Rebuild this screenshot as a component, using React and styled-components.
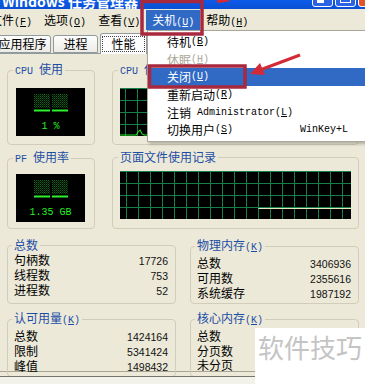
import React from 'react';
import styled, { createGlobalStyle } from 'styled-components';

const GlobalStyle = createGlobalStyle`
  *, *::before, *::after { box-sizing: border-box; }
  html, body { margin: 0; padding: 0; }
  body {
    width: 365px;
    height: 384px;
    overflow: hidden;
    background: #ece9d8;
    font-family: "Noto Sans CJK SC", "Noto Sans", sans-serif;
    font-size: 12px;
    color: #000;
  }
`;

const Window = styled.div`
  position: relative;
  width: 365px;
  height: 384px;
  overflow: hidden;
  display: flex;
  flex-direction: column;
  background: #ece9d8;
`;

const TitleBar = styled.div`
  height: 9px;
  flex-shrink: 0;
  display: flex;
  align-items: flex-end;
  overflow: hidden;
  background: linear-gradient(#0b5be9, #0a4fd4);
`;

const TitleText = styled.span`
  flex: 1;
  margin: 0 0 1px 2px;
  color: #fff;
  font-weight: bold;
  font-size: 14px;
  line-height: 14px;
  white-space: nowrap;
`;

const CaptionButtons = styled.div`
  display: flex;
  gap: 2px;
  margin: 0 -14px 2px 0;
`;

const CaptionBtn = styled.div`
  position: relative;
  width: 21px;
  height: 21px;
  flex-shrink: 0;
  border: 1px solid #fff;
  border-radius: 3px;
  background: ${p => (p.$kind === 'close' ? '#e0542c' : '#2a64e4')};

  &::after {
    content: '';
    position: absolute;
    left: 4px;
    background: #fff;
    ${p =>
      p.$kind === 'min'
        ? 'bottom: 3px; width: 7px; height: 3px;'
        : p.$kind === 'max'
        ? 'top: 4px; width: 11px; height: 12px; background: transparent; border: 1px solid #fff; border-top-width: 3px;'
        : 'display: none;'}
  }
`;

const MenuBar = styled.div`
  height: 21px;
  flex-shrink: 0;
  display: flex;
  padding-top: 1px;
  margin-left: -16px;
`;

const MenuItem = styled.div`
  padding: 0 6px;
  line-height: 20px;
  white-space: nowrap;
  background: ${p => (p.$active ? '#316ac5' : 'transparent')};
  color: ${p => (p.$active ? '#fff' : '#000')};
`;

const Half = styled.span`
  font-family: "Liberation Mono", "DejaVu Sans Mono", monospace;
  font-size: 10px;
  white-space: pre;
`;

const TabStrip = styled.div`
  position: relative;
  z-index: 1;
  height: 23px;
  flex-shrink: 0;
  display: flex;
  align-items: flex-end;
  gap: 2px;
  margin-left: -6px;
`;

const Tab = styled.div`
  width: ${p => p.$w}px;
  height: ${p => (p.$active ? 21 : 18)}px;
  margin-bottom: ${p => (p.$active ? -1 : 0)}px;
  display: flex;
  align-items: center;
  justify-content: center;
  border: 1px solid #919b9c;
  border-bottom: ${p => (p.$active ? 'none' : '1px solid #919b9c')};
  border-radius: 3px 3px 0 0;
  background: ${p => (p.$active ? '#fcfcfe' : 'linear-gradient(#fefefe, #ecebe6)')};
  line-height: 14px;
  white-space: nowrap;
`;

const FocusLabel = styled.span`
  padding: 0 8px;
  border: 1px dotted #444;
  line-height: 14px;
`;

const TabPage = styled.div`
  height: 319px;
  flex-shrink: 0;
  display: flex;
  flex-direction: column;
  padding: 8px 6px 0 7px;
  border-top: 1px solid #919b9c;
  border-bottom: 1px solid #a8a592;
`;

const StatusBar = styled.div`
  flex: 1;
  margin-top: 4px;
  border-top: 1px solid #77756a;
  background: #f3f2ea;
`;

const Row = styled.div`
  display: grid;
  grid-template-columns: ${p => p.$cols};
  gap: ${p => p.$gap}px;
  margin-top: ${p => p.$mt}px;
`;

const Group = styled.fieldset`
  margin: 0;
  min-width: 0;
  padding: ${p => p.$pad};
  border: 1px solid #d0cdba;
  border-radius: 4px;
`;

const Legend = styled.legend`
  margin-left: -2px;
  padding: 0 2px;
  line-height: 14px;
  color: #1d4ea6;
  white-space: nowrap;
`;

const MeterBox = styled.div`
  width: 69px;
  height: 48px;
  margin: 0 auto;
  padding-top: 6px;
  display: flex;
  flex-direction: column;
  align-items: center;
  background: #000;
`;

const MeterText = styled.span`
  margin-top: 10px;
  font-family: "Liberation Mono", "DejaVu Sans Mono", monospace;
  font-size: 10px;
  line-height: 10px;
  color: #22f022;
  white-space: pre;
`;

const Graph = styled.div`
  position: relative;
  height: 48px;
  background-color: #000;
  background-image:
    linear-gradient(#17804a 1px, transparent 1px),
    linear-gradient(90deg, #17804a 1px, transparent 1px);
  background-size: 12px 12px;
  background-position: ${p => p.$offset}px 0;
`;

const GraphTrace = styled.svg`
  position: absolute;
  inset: 0;
  width: 100%;
  height: 100%;
`;

const StatRow = styled.div`
  display: flex;
  justify-content: space-between;
  align-items: baseline;
  line-height: 14px;
`;

const StatValue = styled.span`
  font-family: "Liberation Sans", Arial, sans-serif;
  font-size: 10.5px;
  color: #111;
`;

const DropMenu = styled.div`
  position: absolute;
  left: 147px;
  top: 30px;
  z-index: 5;
  width: 224px;
  padding: 2px;
  background: #fff;
  border: 1px solid #aca899;
  box-shadow: 2px 2px 3px rgba(0, 0, 0, 0.25);
`;

const DropItem = styled.div`
  height: 17.6px;
  display: flex;
  align-items: center;
  padding: 0 20px 0 17px;
  white-space: nowrap;
  background: ${p => (p.$active ? '#316ac5' : 'transparent')};
  color: ${p => (p.$disabled ? '#aca899' : p.$active ? '#fff' : '#000')};
`;

const Shortcut = styled(Half)`
  margin-left: auto;
`;

const Annotations = styled.svg`
  position: absolute;
  left: 0;
  top: 0;
  z-index: 10;
  pointer-events: none;
`;

const Watermark = styled.div`
  position: absolute;
  left: 255px;
  top: 328px;
  z-index: 11;
  width: 110px;
  height: 56px;
  padding: 4px 0 0 3px;
  background: #fff;
  color: #c4c4c4;
  font-size: 26px;
  line-height: 30px;
  white-space: nowrap;
`;

const menus = [
  { label: '文件', key: 'F' },
  { label: '选项', key: 'O' },
  { label: '查看', key: 'V' },
  { label: '关机', key: 'U', active: true },
  { label: '帮助', key: 'H' },
];

const tabs = [
  { label: '应用程序', w: 57 },
  { label: '进程', w: 45 },
  { label: '性能', w: 47, active: true },
];

const shutdownItems = [
  { label: '待机', key: 'B' },
  { label: '休眠', key: 'H', disabled: true },
  { label: '关闭', key: 'U', active: true },
  { label: '重新启动', key: 'R' },
  { label: '注销', extra: ' Administrator', key: 'L' },
  { label: '切换用户', key: 'S', shortcut: 'WinKey+L' },
];

const totals = [['句柄数', '17726'], ['线程数', '753'], ['进程数', '52']];
const commit = [['总数', '1424164'], ['限制', '5341424'], ['峰值', '1498432']];
const physical = [['总数', '3406936'], ['可用数', '2355616'], ['系统缓存', '1987192']];
const kernel = [['总数', '83592'], ['分页数', ''], ['未分页', '']];

const Key = ({ k, pre = '' }) => (
  <Half>
    {pre}(<u>{k}</u>)
  </Half>
);

const Meter = ({ text }) => (
  <MeterBox>
    <svg width="34" height="18" viewBox="0 0 34 18">
      <defs>
        <pattern id="dots" width="2" height="2" patternUnits="userSpaceOnUse">
          <rect x="0" y="0" width="1" height="1" fill="#0b6a12" />
          <rect x="1" y="1" width="1" height="1" fill="#053d08" />
        </pattern>
      </defs>
      <rect x="0" y="0" width="16" height="14" fill="url(#dots)" />
      <rect x="18" y="0" width="16" height="14" fill="url(#dots)" />
      <rect x="0" y="15.5" width="16" height="2" fill="#2cf02c" />
      <rect x="18" y="15.5" width="16" height="2" fill="#2cf02c" />
    </svg>
    <MeterText>{text}</MeterText>
  </MeterBox>
);

const Stats = ({ title, rows }) => (
  <Group $pad="1px 7px 2px 6px">
    <Legend>{title}</Legend>
    {rows.map(([name, value]) => (
      <StatRow key={name}>
        <span>{name}</span>
        <StatValue>{value}</StatValue>
      </StatRow>
    ))}
  </Group>
);

const App = () => (
  <>
    <GlobalStyle />
    <Window>
      <TitleBar>
        <TitleText>Windows 任务管理器</TitleText>
        <CaptionButtons>
          <CaptionBtn $kind="min" />
          <CaptionBtn $kind="max" />
          <CaptionBtn $kind="close" />
        </CaptionButtons>
      </TitleBar>

      <MenuBar>
        {menus.map(m => (
          <MenuItem key={m.key} $active={m.active}>
            {m.label}
            <Key k={m.key} />
          </MenuItem>
        ))}
      </MenuBar>

      <TabStrip>
        {tabs.map(t => (
          <Tab key={t.label} $w={t.w} $active={t.active}>
            {t.active ? <FocusLabel>{t.label}</FocusLabel> : t.label}
          </Tab>
        ))}
      </TabStrip>

      <TabPage>
        <Row $cols="88px 1fr" $gap={17} $mt={0}>
          <Group $pad="9px 8px 8px 7px">
            <Legend>
              <Half>CPU </Half>使用
            </Legend>
            <Meter text="1 %" />
          </Group>
          <Group $pad="9px 7px 8px 7px">
            <Legend>
              <Half>CPU </Half>使用记录
            </Legend>
            <Graph $offset={5}>
              <GraphTrace viewBox="0 0 230 48" preserveAspectRatio="none">
                <polyline
                  points="0,47 16,47 18,44 20,42 22,46 24,47 230,47"
                  fill="none"
                  stroke="#20f020"
                  strokeWidth="1"
                />
              </GraphTrace>
            </Graph>
          </Group>
        </Row>

        <Row $cols="88px 1fr" $gap={17} $mt={5}>
          <Group $pad="7px 8px 6px 7px">
            <Legend>
              <Half>PF </Half>使用率
            </Legend>
            <Meter text="1.35 GB" />
          </Group>
          <Group $pad="7px 7px 6px 7px">
            <Legend>页面文件使用记录</Legend>
            <Graph $offset={6}>
              <GraphTrace viewBox="0 0 232 48" preserveAspectRatio="none">
                <line x1="139" y1="37.5" x2="232" y2="37.5" stroke="#e9e9bd" strokeWidth="1" />
              </GraphTrace>
            </Graph>
          </Group>
        </Row>

        <Row $cols="1fr 1fr" $gap={14} $mt={9}>
          <Stats title="总数" rows={totals} />
          <Stats
            title={
              <>
                物理内存<Key k="K" />
              </>
            }
            rows={physical}
          />
        </Row>

        <Row $cols="1fr 1fr" $gap={14} $mt={7}>
          <Stats
            title={
              <>
                认可用量<Key k="K" />
              </>
            }
            rows={commit}
          />
          <Stats
            title={
              <>
                核心内存<Key k="K" />
              </>
            }
            rows={kernel}
          />
        </Row>
      </TabPage>

      <StatusBar />

      <DropMenu>
        {shutdownItems.map(item => (
          <DropItem key={item.key} $active={item.active} $disabled={item.disabled}>
            {item.label}
            <Key k={item.key} pre={item.extra} />
            {item.shortcut && <Shortcut>{item.shortcut}</Shortcut>}
          </DropItem>
        ))}
      </DropMenu>

      <Annotations width="365" height="384" viewBox="0 0 365 384">
        <rect x="142" y="1.5" width="60" height="32.5" fill="none" stroke="#a8283e" strokeWidth="3.5" />
        <rect x="149.5" y="66" width="95.5" height="21" fill="none" stroke="#a8283e" strokeWidth="3.5" />
        <line x1="300" y1="55" x2="260" y2="70" stroke="#d42a35" strokeWidth="3" />
        <polygon points="250,74 260,63 265,75" fill="#d42a35" />
        <line x1="217" y1="1.5" x2="229" y2="0" stroke="#d42a35" strokeWidth="3" />
      </Annotations>

      <Watermark>软件技巧</Watermark>
    </Window>
  </>
);

export default App;
